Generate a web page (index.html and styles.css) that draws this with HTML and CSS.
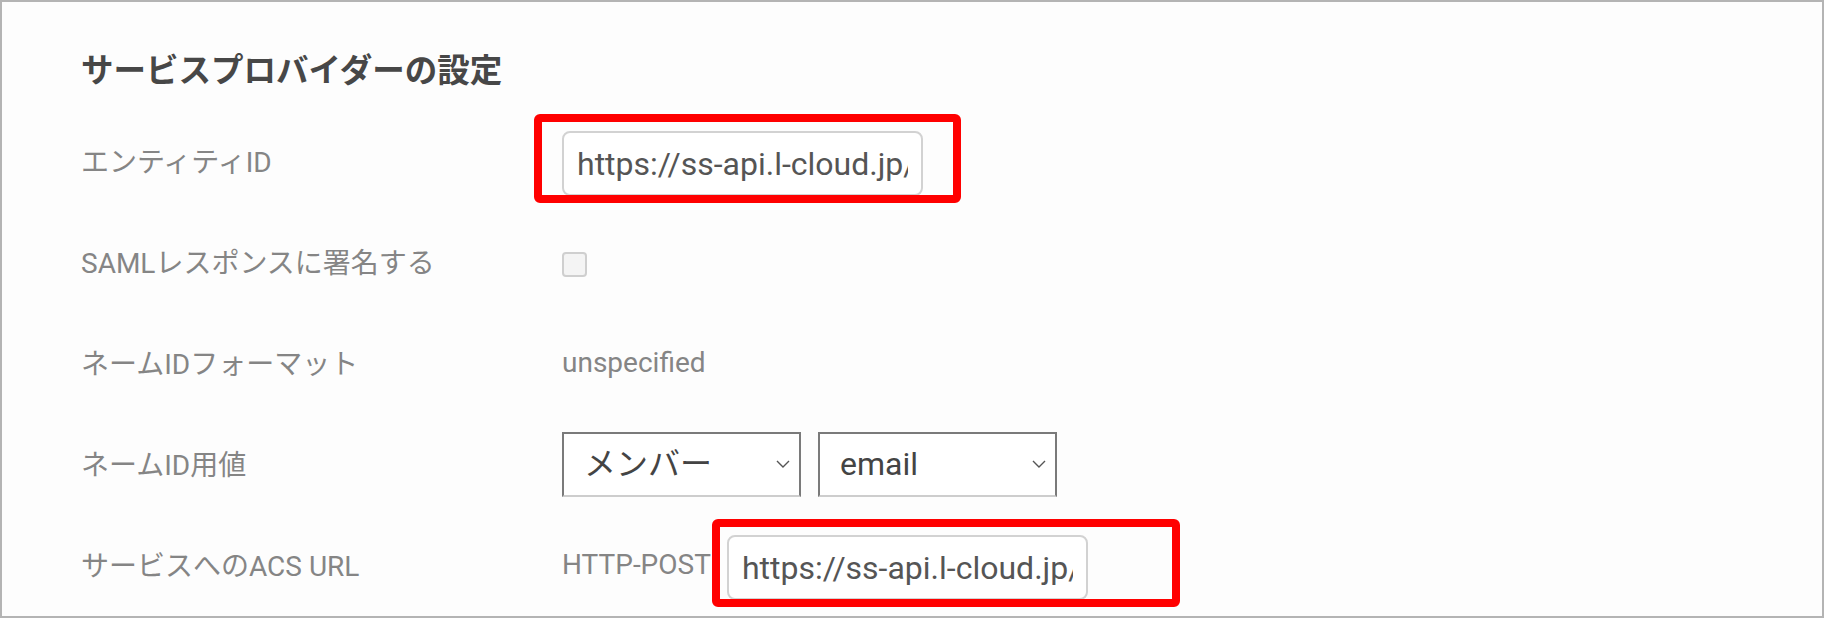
FILE: index.html
```html
<!DOCTYPE html>
<html lang="ja">
<head>
  <meta charset="UTF-8" />
  <meta name="viewport" content="width=device-width, initial-scale=1.0" />
  <title>サービスプロバイダーの設定</title>
  <link rel="stylesheet" href="styles.css">
</head>
<body>
  <div class="panel">
    <h2>サービスプロバイダーの設定</h2>

    <div class="row">
      <div class="label">エンティティID</div>
      <div class="value">
        <div class="marked mark-entity">
          <input type="text" class="text-field" value="https://ss-api.l-cloud.jp/saml/metadata" readonly>
        </div>
      </div>
    </div>

    <div class="row">
      <div class="label">SAMLレスポンスに署名する</div>
      <div class="value">
        <input type="checkbox" class="check">
      </div>
    </div>

    <div class="row">
      <div class="label">ネームIDフォーマット</div>
      <div class="value">
        <span class="plain">unspecified</span>
      </div>
    </div>

    <div class="row">
      <div class="label">ネームID用値</div>
      <div class="value">
        <div class="select-box">
          <select>
            <option>メンバー</option>
          </select>
          <svg viewBox="0 0 14 8" width="14" height="8"><path d="M1 1l6 6 6-6" fill="none" stroke="#555" stroke-width="1.4"/></svg>
        </div>
        <div class="select-box">
          <select>
            <option>email</option>
          </select>
          <svg viewBox="0 0 14 8" width="14" height="8"><path d="M1 1l6 6 6-6" fill="none" stroke="#555" stroke-width="1.4"/></svg>
        </div>
      </div>
    </div>

    <div class="row">
      <div class="label">サービスへのACS URL</div>
      <div class="value">
        <span class="plain">HTTP-POST</span>
        <div class="marked mark-acs">
          <input type="text" class="text-field" value="https://ss-api.l-cloud.jp/saml/acs" readonly>
        </div>
      </div>
    </div>
  </div>
</body>
</html>
```

FILE: styles.css
```css
* {
  box-sizing: border-box;
}
html, body {
  margin: 0;
  height: 100%;
}
body {
  font-family: Roboto, "Noto Sans CJK JP", sans-serif;
  background: #fdfdfd;
}
.panel {
  height: 618px;
  border: 2px solid #b4b4b4;
  background: #fdfdfd;
  padding-left: 79px;
  overflow: hidden;
}
h2 {
  margin: 49px 0 22px;
  font-size: 32.5px;
  line-height: 40px;
  font-weight: bold;
  color: #474747;
}
.row {
  display: flex;
  align-items: center;
  height: 101px;
}
.label {
  width: 481px;
  padding-bottom: 8px;
  font-size: 28px;
  color: #858585;
}
.value {
  display: flex;
  align-items: center;
  font-size: 28px;
  color: #858585;
}
.plain {
  padding-bottom: 6px;
}
.text-field {
  display: block;
  width: 361px;
  height: 65px;
  margin: 0;
  padding: 0 13px;
  border: 2px solid #d2d2d2;
  border-radius: 8px;
  background: #fff;
  font-family: Roboto, "Noto Sans CJK JP", sans-serif;
  font-size: 32px;
  color: #555;
  outline: none;
}
.check {
  appearance: none;
  width: 25px;
  height: 25px;
  margin: 0;
  border: 2px solid #cfcfcf;
  border-radius: 4px;
  background: #f4f4f4;
}
.select-box {
  position: relative;
  margin: 0 17px 5px 0;
}
.select-box select {
  appearance: none;
  display: block;
  width: 239px;
  height: 65px;
  margin: 0;
  padding: 0 0 0 20px;
  border: 2px solid #7a7a7a;
  border-bottom-color: #cdcdcd;
  border-radius: 0;
  background: #fff;
  font-family: Roboto, "Noto Sans CJK JP", sans-serif;
  font-size: 32px;
  color: #444;
}
.select-box svg {
  position: absolute;
  right: 11px;
  top: 28px;
  pointer-events: none;
}

/* red highlight frames drawn over the url fields */
.marked {
  position: relative;
  display: flex;
}
.marked::after {
  content: "";
  position: absolute;
  border: 8px solid #ff0000;
  border-radius: 6px;
  pointer-events: none;
}
.mark-entity::after {
  left: -28px;
  top: -17px;
  right: -38px;
  bottom: -7px;
}
.mark-acs {
  margin-left: 16px;
}
.mark-acs::after {
  left: -15px;
  top: -16px;
  right: -92px;
  bottom: -7px;
}
```
